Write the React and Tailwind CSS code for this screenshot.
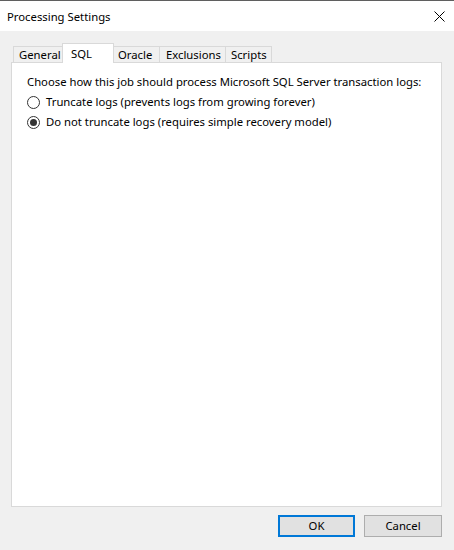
import React from "react";

const font = { fontFamily: '"Noto Sans", "Segoe UI", sans-serif' };

function Radio({ checked, label }) {
  return (
    <div className="flex items-center h-[20px]">
      <div className="w-[13px] h-[13px] rounded-full border border-[#333333] bg-white flex items-center justify-center">
        {checked && <div className="w-[7px] h-[7px] rounded-full bg-[#333333]" />}
      </div>
      <span className="ml-[6px] text-[11.3px] text-black leading-none whitespace-nowrap">{label}</span>
    </div>
  );
}

export default function App() {
  return (
    <div className="w-[454px] h-[550px] flex flex-col bg-[#f0f0f0] text-black" style={font}>
      <div className="h-[31px] bg-white border-t border-[#5f5f5f] flex items-center justify-between pl-[7px] pr-[8px] pt-[1px]">
        <span className="text-[11.3px] leading-none">Processing Settings</span>
        <svg width="11" height="11" viewBox="0 0 11 11" className="mr-[1px]">
          <path d="M0.5 0.5 L10.5 10.5 M10.5 0.5 L0.5 10.5" stroke="#000" strokeWidth="1" fill="none" />
        </svg>
      </div>
      <div className="flex-1 flex flex-col px-[11px] pt-[12px]">
        <div className="flex items-end h-[20px] pl-[2px] relative z-10 -mb-px">
          <div className="w-[49px] h-[16px] mb-px border-l border-t border-[#d9d9d9] flex items-center pl-[5px] text-[11.3px] leading-none">General</div>
          <div className="w-[52px] h-[20px] border-l border-t border-r border-[#d9d9d9] bg-white flex items-start pt-[4px] pl-[8px] text-[11.3px] leading-none">SQL</div>
          <div className="w-[46px] h-[16px] mb-px border-t border-r border-[#d9d9d9] flex items-center pl-[4px] text-[11.3px] leading-none">Oracle</div>
          <div className="w-[66px] h-[16px] mb-px border-t border-r border-[#d9d9d9] flex items-center pl-[6px] text-[11.3px] leading-none">Exclusions</div>
          <div className="w-[46px] h-[16px] mb-px border-t border-r border-[#d9d9d9] flex items-center pl-[5px] text-[11.3px] leading-none">Scripts</div>
        </div>
        <div className="w-[431px] h-[445px] bg-white border border-[#d9d9d9] pl-[15px] pt-[9px]">
          <div className="text-[11.3px] leading-none h-[20px] flex items-center whitespace-nowrap">Choose how this job should process Microsoft SQL Server transaction logs:</div>
          <Radio checked={false} label="Truncate logs (prevents logs from growing forever)" />
          <Radio checked={true} label="Do not truncate logs (requires simple recovery model)" />
        </div>
        <div className="flex justify-end mt-[8px] pr-[1px] gap-[9px]">
          <button className="w-[77px] h-[22px] border-2 border-[#0078d7] bg-[#e1e1e1] text-[11.3px] leading-none flex items-center justify-center">OK</button>
          <button className="w-[78px] h-[22px] border border-[#adadad] bg-[#e1e1e1] text-[11.3px] leading-none flex items-center justify-center">Cancel</button>
        </div>
      </div>
    </div>
  );
}
